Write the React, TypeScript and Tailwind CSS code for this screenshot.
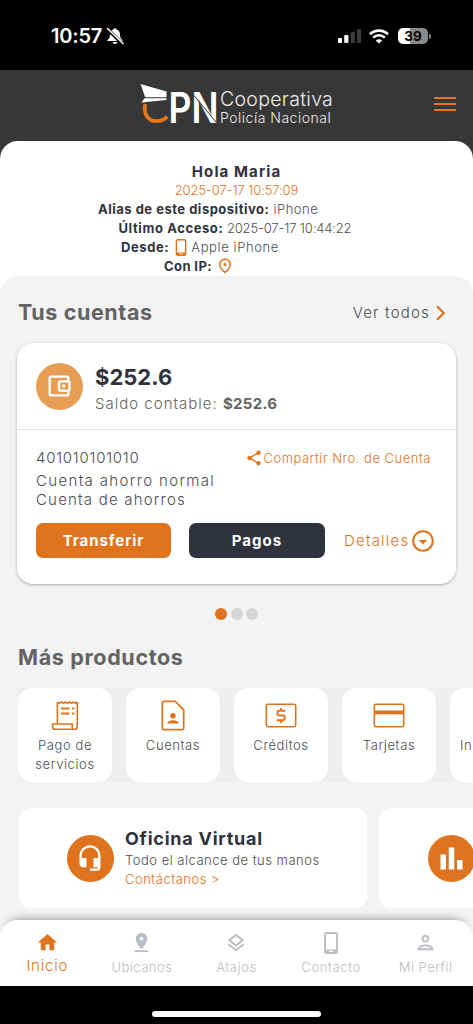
import { ReactNode } from "react";
import {
  MdBarChart,
  MdHeadsetMic,
  MdHome,
  MdOutlineAccountBalanceWallet,
  MdOutlineArrowDropDownCircle,
  MdOutlineLayers,
  MdOutlinePerson,
  MdOutlinePlace,
  MdPinDrop,
  MdShare,
} from "react-icons/md";

interface IconItem {
  label: string;
  icon: ReactNode;
  tracking: string;
}

const PhoneIcon = ({ className }: { className?: string }) => (
  <svg viewBox="0 0 14 22" className={className} fill="none">
    <rect x="1" y="1" width="12" height="20" rx="1.6" stroke="currentColor" strokeWidth="1.8" />
    <path d="M1 17.6h12V20l-1 1H2l-1-1z" fill="currentColor" />
    <path d="M5 19.4h4" stroke="#fff" strokeWidth="1.2" />
  </svg>
);

const BellOffIcon = () => (
  <svg width="18" height="18" viewBox="0 0 18 18" className="ml-[4px] mt-[2px]">
    <path d="M9 1.200c-.9 0-1.500.6-1.600 1.300C5 3.200 4 5.200 4 7.500c0 3.300-1 4.200-2.300 5.200-.6.500-.5 1.300.3 1.300h14c.8 0 .9-.8.3-1.300C15 11.700 14 10.800 14 7.500c0-2.300-1-4.300-3.400-5C10.500 1.800 9.900 1.200 9 1.200z" fill="#fff" />
    <path d="M6.500 15h5c-.3 1.200-1.300 2-2.500 2s-2.200-.8-2.500-2z" fill="#fff" />
    <path d="M1 1.500 16.500 17" stroke="#000" strokeWidth="3.4" />
    <path d="M1.500 1.500 17 16.500" stroke="#fff" strokeWidth="1.500" strokeLinecap="round" />
  </svg>
);

const ReceiptIcon = () => (
  <svg width="28" height="31" viewBox="0 0 28 31" fill="none" stroke="currentColor" strokeWidth="1.6">
    <path d="M6.400 24V2M26.300 2V27a2.200 2.200 0 0 1-2.200 2.300H4.200A2.600 2.600 0 0 1 1.600 26.700V24h19.600v3.300a2 2 0 0 0 2 2" />
    <path d="m6.400 2 2 1.300 2-1.300 2 1.300 2-1.300 2 1.300 2-1.300 2 1.300 2-1.300 2 1.300 1.900-1.300" />
    <path d="M10 8.500h8.500M10 13.500h8.500M21 8.500h2.400M21 13.500h2.400" strokeWidth="1.900" />
  </svg>
);

const AccountIcon = () => (
  <svg width="24" height="31" viewBox="0 0 24 31">
    <path
      d="M2.800 1.300h11.400l8.500 8.500v18.400a1.500 1.500 0 0 1-1.500 1.500H2.800a1.500 1.500 0 0 1-1.500-1.500V2.800a1.500 1.500 0 0 1 1.500-1.500z"
      fill="none"
      stroke="currentColor"
      strokeWidth="1.700"
    />
    <circle cx="12" cy="15.800" r="2.700" fill="currentColor" />
    <path d="M6.200 23.500c.3-2.200 2.800-3.300 5.800-3.300s5.500 1.100 5.800 3.300z" fill="currentColor" />
  </svg>
);

const CashIcon = () => (
  <svg width="32" height="25" viewBox="0 0 32 25" fill="none" stroke="currentColor">
    <rect x="1.300" y="1.300" width="29.400" height="22.400" rx="1.600" strokeWidth="1.600" />
    <path d="M20.300 7.800h-6.600a1.200 1.200 0 0 0-1.200 1.200v2.200a1.200 1.200 0 0 0 1.200 1.200h4.600a1.200 1.200 0 0 1 1.200 1.200v2.400a1.200 1.200 0 0 1-1.200 1.200h-6.600M16 5v3M16 17v3" strokeWidth="1.900" />
  </svg>
);

const CardIcon = () => (
  <svg width="32" height="25" viewBox="0 0 32 25" fill="none" stroke="currentColor">
    <rect x="1.300" y="1.300" width="29.400" height="22.400" rx="1.600" strokeWidth="1.600" />
    <path d="M1 9.400h30" strokeWidth="3.800" />
  </svg>
);

const products: IconItem[] = [
  { label: "Pago de servicios", icon: <ReceiptIcon />, tracking: "tracking-[0.6px]" },
  { label: "Cuentas", icon: <AccountIcon />, tracking: "tracking-[0.6px]" },
  { label: "Créditos", icon: <CashIcon />, tracking: "tracking-[0.6px]" },
  { label: "Tarjetas", icon: <CardIcon />, tracking: "tracking-[0.6px]" },
];

const tabs: IconItem[] = [
  { label: "Ubícanos", icon: <MdPinDrop size={23} />, tracking: "tracking-[0.5px]" },
  { label: "Atajos", icon: <MdOutlineLayers size={22} />, tracking: "tracking-[0.6px]" },
  { label: "Contacto", icon: <PhoneIcon className="h-[22px] w-[14px]" />, tracking: "tracking-[0.6px]" },
  { label: "Mi Perfil", icon: <MdOutlinePerson size={23} />, tracking: "tracking-[0.5px]" },
];

const StatusBar = () => (
  <div className="flex h-[70px] shrink-0 items-start bg-black pl-[51px] pr-[42px] pt-[25px] text-white">
    <span className="text-[20px] font-semibold leading-[23px] tracking-[-0.2px]">10:57</span>
    <BellOffIcon />
    <div className="ml-auto flex items-center pt-[3px]">
      <svg width="24" height="16" viewBox="0 0 24 16">
        <rect x="0" y="10" width="4" height="5" rx="1" fill="#fff" />
        <rect x="6.2" y="7" width="4.2" height="8" rx="1" fill="#fff" />
        <rect x="12.7" y="4" width="4.2" height="11" rx="1" fill="#3a3a3a" />
        <rect x="19" y="1" width="4.2" height="14" rx="1" fill="#3a3a3a" />
      </svg>
      <svg width="20" height="15" viewBox="0 0 20 15" className="ml-[7px]" fill="none" stroke="#fff" strokeWidth="2.6">
        <path d="M1 5.2a13 13 0 0 1 18 0" />
        <path d="M4.2 8.6a8.4 8.4 0 0 1 11.6 0" />
        <path d="M10 14.6 6.8 11.5a4.6 4.6 0 0 1 6.4 0z" fill="#fff" stroke="none" />
      </svg>
      <div className="ml-[9px] flex h-4 w-[30px] items-center justify-center rounded-[5px] bg-linear-to-r from-white from-39% to-[#8a8a8a] to-39%">
        <span className="text-[13.500px] font-bold leading-4 text-black">39</span>
      </div>
      <div className="ml-px h-[5px] w-[2px] rounded-r-full bg-[#8a8a8a]" />
    </div>
  </div>
);

const Logo = () => (
  <div className="flex items-start">
    <svg width="78" height="42" viewBox="0 0 78 42" className="overflow-visible">
      <path d="M.5 0 26.500 7.500v5.700H5.200z" fill="#fff" />
      <path d="M4.600 14.200h21.900v1.900L1.500 18.600z" fill="#fff" />
      <path
        d="M5.400 20C3 28.500 7.500 37 16 37.200c5.500 0 8.800-1.800 11.300-4.700"
        fill="none"
        stroke="#e2761b"
        strokeWidth="3.800"
      />
      <text x="28.500" y="39" fill="#fff" fontFamily="Inter" fontWeight="600" fontSize="42" textLength="50" lengthAdjust="spacingAndGlyphs">
        PN
      </text>
      <path d="M54 11.500 76 38" stroke="#373737" strokeWidth="1" />
    </svg>
    <div className="ml-[2px] mt-[5px] text-[#ececec]">
      <div className="text-[19.500px] font-light leading-[21px] tracking-[0.3px]">Cooperativa</div>
      <div className="text-[14px] font-light leading-[16px] tracking-[0.5px]">Policía Nacional</div>
    </div>
  </div>
);

const Header = () => (
  <div className="flex h-[71px] shrink-0 items-start bg-[#373737] pl-[140px] pr-[17px] pt-[14px]">
    <Logo />
    <div className="ml-auto mt-[13px] flex w-[22px] flex-col gap-[4px]">
      <div className="h-[2px] bg-[#e2761b]" />
      <div className="h-[2px] bg-[#e2761b]" />
      <div className="h-[2px] bg-[#e2761b]" />
    </div>
  </div>
);

const Greeting = () => (
  <div className="shrink-0 bg-[#373737]">
    <div className="h-[135px] rounded-t-[18px] bg-white pt-[20.500px] text-[13px] leading-[19px] text-[#4a4d55]">
      <div className="text-center text-[15px] font-bold tracking-[1.100px] text-[#2f333d]">Hola Maria</div>
      <div className="text-center font-light tracking-[-0.1px] text-[#e0731d]">2025-07-17 10:57:09</div>
      <div className="pl-[98px] font-light tracking-[0.5px]">
        <b className="font-bold text-[#2f333d]">Alias de este dispositivo:</b> iPhone
      </div>
      <div className="pl-[118.500px] font-light tracking-[-0.15px]">
        <b className="font-bold tracking-[0.6px] text-[#2f333d]">Último Acceso:</b> 2025-07-17 10:44:22
      </div>
      <div className="flex items-center pl-[121px] font-light tracking-[0.6px]">
        <b className="font-bold text-[#2f333d]">Desde:</b>
        <PhoneIcon className="ml-[6px] mr-[4px] h-[17px] w-[12px] text-[#e0731d]" />
        <span>Apple iPhone</span>
      </div>
      <div className="flex items-center pl-[164px] tracking-[0.4px]">
        <b className="font-bold text-[#2f333d]">Con IP:</b>
        <MdOutlinePlace size={18} className="ml-[4px] text-[#e0731d]" />
      </div>
    </div>
  </div>
);

const AccountCard = () => (
  <div className="mx-[17px] mt-[17px] h-[241px] rounded-[16px] bg-white shadow-[0_1px_3px_rgba(0,0,0,0.3)]">
    <div className="flex h-[87px] items-center border-b border-[#e4e4e4] pl-[19px]">
      <div className="flex h-[47px] w-[47px] items-center justify-center rounded-full bg-[#e89d54] pr-[2px] text-white">
        <MdOutlineAccountBalanceWallet size={28} />
      </div>
      <div className="ml-3 pt-2">
        <div className="text-[22px] font-bold leading-[28px] text-[#2f333d]">$252.6</div>
        <div className="text-[15px] font-light leading-[26px] tracking-[1px] text-[#636363]">
          Saldo contable: <b className="font-bold tracking-[0.3px]">$252.6</b>
        </div>
      </div>
    </div>
    <div className="px-[19px] pt-[18px] text-[15px] leading-[19px] text-[#4a4d55]">
      <div className="flex h-[23px] items-start">
        <span className="font-light tracking-[0.75px]">401010101010</span>
        <MdShare size={18} className="ml-auto mt-[1px] text-[#e0731d]" />
        <span className="mr-[6px] mt-[1px] text-[13px] font-light tracking-[0.5px] text-[#e0731d]">Compartir Nro. de Cuenta</span>
      </div>
      <div className="font-[350] tracking-[1.350px]">Cuenta ahorro normal</div>
      <div className="font-[350] tracking-[1.200px]">Cuenta de ahorros</div>
      <div className="mt-[14px] flex items-center">
        <button className="h-[35px] w-[135px] shrink-0 rounded-[7px] bg-[#e0731d] font-bold tracking-[0.9px] text-white">Transferir</button>
        <button className="ml-[18px] h-[35px] w-[136px] shrink-0 rounded-[7px] bg-[#2f333d] font-bold tracking-[1px] text-white">Pagos</button>
        <span className="ml-[19px] font-light tracking-[1.200px] text-[#e0731d]">Detalles</span>
        <MdOutlineArrowDropDownCircle size={26} className="ml-px shrink-0 text-[#e0731d]" />
      </div>
    </div>
  </div>
);

const Dots = () => (
  <div className="mt-[24px] flex justify-center gap-[3.500px]">
    <div className="h-3 w-3 rounded-full bg-[#e0731d]" />
    <div className="h-3 w-3 rounded-full bg-[#d6d6d6]" />
    <div className="h-3 w-3 rounded-full bg-[#d6d6d6]" />
  </div>
);

const Products = () => (
  <div className="ml-[18px] mt-[17px] flex gap-[14px] bg-[#eeeeee]">
    {products.map((product) => (
      <div
        key={product.label}
        className="flex h-[94px] w-[94px] shrink-0 flex-col items-center rounded-[14px] bg-white pt-[9px] text-[#e0731d]"
      >
        <div className="flex h-9 items-center">{product.icon}</div>
        <div className={`mt-[3px] w-[70px] text-center text-[13px] font-[350] leading-[18.500px] text-[#4a4d55] ${product.tracking}`}>
          {product.label}
        </div>
      </div>
    ))}
    <div className="h-[94px] w-[23px] shrink-0 overflow-hidden rounded-l-[14px] bg-white pl-[10px] pt-[48px] text-[13px] font-[350] leading-[18.500px] tracking-[0.5px] text-[#4a4d55]">
      In
    </div>
  </div>
);

const Promos = () => (
  <div className="ml-[19px] mt-[26px] flex gap-3 overflow-hidden">
    <div className="flex h-[100px] w-[348px] shrink-0 items-center rounded-[12px] bg-white pl-[47.500px]">
      <div className="flex h-[47px] w-[47px] items-center justify-center rounded-full bg-[#e0731d] text-white">
        <MdHeadsetMic size={28} />
      </div>
      <div className="ml-[11.500px] text-[13px] font-[350] leading-[19px]">
        <div className="text-[18px] font-bold leading-6 tracking-[0.75px] text-[#2f333d]">Oficina Virtual</div>
        <div className="tracking-[0.5px] text-[#4a4d55]">Todo el alcance de tus manos</div>
        <div className="tracking-[0.5px] text-[#e0731d]">Contáctanos &gt;</div>
      </div>
    </div>
    <div className="flex h-[100px] w-[348px] shrink-0 items-center rounded-[12px] bg-white pl-[49px]">
      <div className="flex h-[47px] w-[47px] items-center justify-center rounded-full bg-[#e0731d] text-white">
        <MdBarChart size={33} />
      </div>
    </div>
  </div>
);

const BottomNav = () => (
  <div className="grid h-[66px] shrink-0 grid-cols-5 rounded-t-[18px] bg-white text-[#babdc3] shadow-[0_-9px_10px_-9px_rgba(0,0,0,0.45)]">
    <div className="flex flex-col items-center pt-[11px] text-[#e0731d]">
      <MdHome size={23} />
      <span className="mt-[2px] text-[15px] font-[350] leading-[19px] tracking-[0.8px]">Inicio</span>
    </div>
    {tabs.map((tab) => (
      <div key={tab.label} className="flex flex-col items-center pt-[11px]">
        <div className="flex h-[23px] items-center">{tab.icon}</div>
        <span className={`mt-[4px] text-[13px] font-light leading-[18px] text-[#babdc3] ${tab.tracking}`}>{tab.label}</span>
      </div>
    ))}
  </div>
);

export default function App() {
  return (
    <div className="flex h-[1024px] w-[473px] flex-col overflow-hidden bg-[#f3f3f3] font-['Inter',sans-serif]">
      <StatusBar />
      <Header />
      <Greeting />
      <div className="h-[644px] shrink-0 bg-white">
        <div className="h-full rounded-t-[18px] bg-[#f3f3f3] pt-[24px]">
          <div className="flex h-[26px] items-center pl-[18px] pr-[27px]">
            <h2 className="-mt-[2px] text-[21.500px] font-bold tracking-[0.6px] text-[#636363]">Tus cuentas</h2>
            <span className="ml-auto text-[15px] font-[350] tracking-[1.200px] text-[#4a4d55]">Ver todos</span>
            <svg width="10" height="16" viewBox="0 0 10 16" className="ml-[6px]" fill="none">
              <path d="m1 1.300 6.700 6.700-6.700 6.700" stroke="#e0731d" strokeWidth="2.200" />
            </svg>
          </div>
          <AccountCard />
          <Dots />
          <h2 className="ml-[18px] mt-[23px] text-[21.500px] font-bold leading-[28px] tracking-[0.65px] text-[#636363]">
            Más productos
          </h2>
          <Products />
          <Promos />
        </div>
      </div>
      <BottomNav />
      <div className="flex h-[38px] shrink-0 justify-center bg-black pt-[25px]">
        <div className="h-[6px] w-[169px] rounded-full bg-white" />
      </div>
    </div>
  );
}
